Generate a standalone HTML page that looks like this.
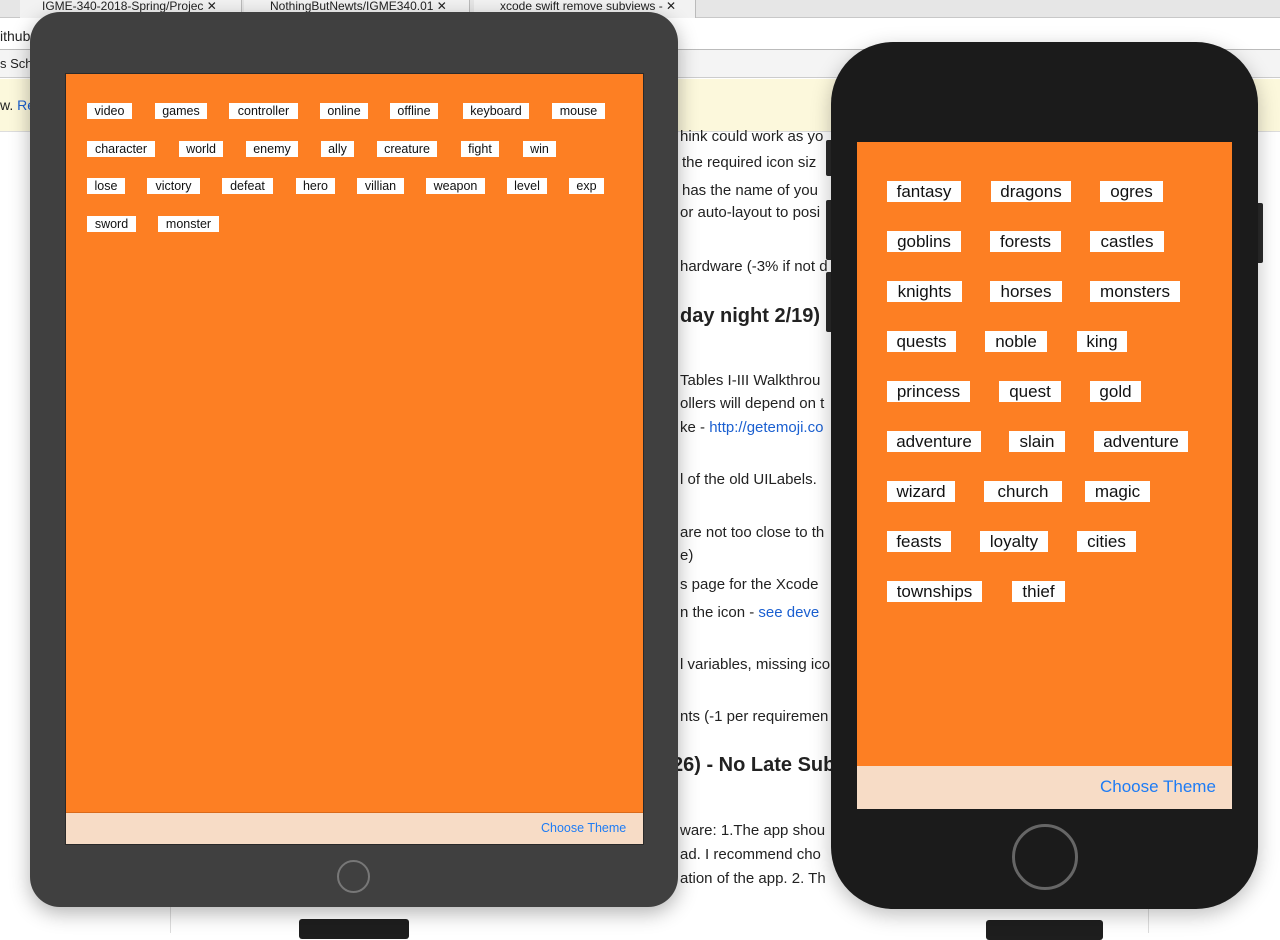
<!DOCTYPE html>
<html><head><meta charset="utf-8"><style>
*{margin:0;padding:0;box-sizing:border-box}
body{width:1280px;height:933px;overflow:hidden;position:relative;background:#fff;font-family:"Liberation Sans",sans-serif}
.a{position:absolute}
.t{position:absolute;font-size:15px;color:#222;white-space:nowrap}
.l{position:absolute;background:#fff;color:#111;white-space:nowrap;text-align:center}
.pl{font-size:12.5px;height:16px;line-height:16px}
.ph{font-size:17px;height:21px;line-height:21px}
</style></head><body>
<div class="a" style="left:0;top:0;width:1280px;height:18px;background:#e6e6e6;border-bottom:1px solid #c8c8c8"></div>
<div class="a" style="left:20px;top:0;width:222px;height:18px;background:#f2f2f2;border-right:1px solid #bbb;font-size:12px;line-height:12px;padding-left:22px;color:#222">IGME-340-2018-Spring/Projec ✕</div>
<div class="a" style="left:244px;top:0;width:226px;height:18px;background:#f2f2f2;border-right:1px solid #bbb;font-size:12px;line-height:12px;padding-left:26px;color:#222">NothingButNewts/IGME340.01 ✕</div>
<div class="a" style="left:474px;top:0;width:222px;height:18px;background:#f2f2f2;border-right:1px solid #bbb;font-size:12px;line-height:12px;padding-left:26px;color:#222">xcode swift remove subviews - ✕</div>
<div class="a" style="left:0;top:18px;width:1280px;height:32px;background:#fff;border-bottom:1px solid #bbb"></div>
<div class="t" style="left:0;top:28px;font-size:14px">ithub</div>
<div class="a" style="left:0;top:50px;width:1280px;height:28px;background:#f4f4f4;border-bottom:1px solid #ccc"></div>
<div class="t" style="left:0;top:56px;font-size:13px">s Sch</div>
<div class="a" style="left:0;top:79px;width:1280px;height:53px;background:#fcf8dc;border-bottom:1px solid #ddd"></div>
<div class="t" style="left:0;top:97px;font-size:14px">w. <span style="color:#1a5fd0">Re</span></div>
<div class="a" style="left:170px;top:132px;width:1px;height:801px;background:#ddd"></div>
<div class="a" style="left:1148px;top:132px;width:1px;height:801px;background:#ddd"></div>
<div class="t" style="left:680px;top:128px">hink could work as yo</div>
<div class="t" style="left:682px;top:154px">the required icon siz</div>
<div class="t" style="left:682px;top:182px">has the name of you</div>
<div class="t" style="left:680px;top:204px">or auto-layout to posi</div>
<div class="t" style="left:680px;top:258px">hardware (-3% if not d</div>
<div class="t" style="left:680px;top:305px;font-size:20px;font-weight:bold">day night 2/19) -</div>
<div class="t" style="left:680px;top:372px">Tables I-III Walkthrou</div>
<div class="t" style="left:680px;top:395px">ollers will depend on t</div>
<div class="t" style="left:680px;top:419px">ke - <span style="color:#1a5fd0">http://getemoji.co</span></div>
<div class="t" style="left:680px;top:471px">l of the old UILabels.</div>
<div class="t" style="left:680px;top:524px">are not too close to th</div>
<div class="t" style="left:680px;top:547px">e)</div>
<div class="t" style="left:680px;top:576px">s page for the Xcode</div>
<div class="t" style="left:680px;top:604px">n the icon - <span style="color:#1a5fd0">see deve</span></div>
<div class="t" style="left:680px;top:656px">l variables, missing ico</div>
<div class="t" style="left:680px;top:708px">nts (-1 per requiremen</div>
<div class="t" style="left:672px;top:754px;font-size:20px;font-weight:bold">26) - No Late Subr</div>
<div class="t" style="left:680px;top:822px">ware: 1.The app shou</div>
<div class="t" style="left:680px;top:846px">ad. I recommend cho</div>
<div class="t" style="left:680px;top:870px">ation of the app. 2. Th</div>
<div class="t" style="left:250px;top:895px;font-size:13px">issues.</div>
<div class="a" style="left:299px;top:919px;width:110px;height:20px;background:#1e1e1e;border-radius:3px"></div>
<div class="a" style="left:986px;top:920px;width:117px;height:20px;background:#1e1e1e;border-radius:3px"></div>

<div class="a" style="left:30px;top:12px;width:648px;height:895px;background:#404040;border-radius:30px;box-shadow:0 6px 20px rgba(0,0,0,.3)"></div>
<div class="a" style="left:65px;top:73px;width:579px;height:772px;background:#fd7f23;border:1px solid #2a2a2a"></div>
<div class="a" style="left:66px;top:812px;width:577px;height:32px;background:#f7dcc6;border-top:1px solid #d96a1a"></div>
<div class="a" style="left:541px;top:821px;font-size:12.5px;color:#1e7cf5">Choose Theme</div>
<div class="a" style="left:337px;top:860px;width:33px;height:33px;border:2px solid #777;border-radius:50%"></div>

<div class="l pl" style="left:87px;top:103px;width:45px">video</div>
<div class="l pl" style="left:155px;top:103px;width:52px">games</div>
<div class="l pl" style="left:229px;top:103px;width:69px">controller</div>
<div class="l pl" style="left:320px;top:103px;width:48px">online</div>
<div class="l pl" style="left:390px;top:103px;width:48px">offline</div>
<div class="l pl" style="left:463px;top:103px;width:66px">keyboard</div>
<div class="l pl" style="left:552px;top:103px;width:53px">mouse</div>
<div class="l pl" style="left:87px;top:141px;width:68px">character</div>
<div class="l pl" style="left:179px;top:141px;width:44px">world</div>
<div class="l pl" style="left:246px;top:141px;width:52px">enemy</div>
<div class="l pl" style="left:321px;top:141px;width:33px">ally</div>
<div class="l pl" style="left:377px;top:141px;width:60px">creature</div>
<div class="l pl" style="left:461px;top:141px;width:38px">fight</div>
<div class="l pl" style="left:523px;top:141px;width:33px">win</div>
<div class="l pl" style="left:87px;top:178px;width:38px">lose</div>
<div class="l pl" style="left:147px;top:178px;width:53px">victory</div>
<div class="l pl" style="left:222px;top:178px;width:51px">defeat</div>
<div class="l pl" style="left:296px;top:178px;width:39px">hero</div>
<div class="l pl" style="left:357px;top:178px;width:47px">villian</div>
<div class="l pl" style="left:426px;top:178px;width:59px">weapon</div>
<div class="l pl" style="left:507px;top:178px;width:40px">level</div>
<div class="l pl" style="left:569px;top:178px;width:35px">exp</div>
<div class="l pl" style="left:87px;top:216px;width:49px">sword</div>
<div class="l pl" style="left:158px;top:216px;width:61px">monster</div>

<div class="a" style="left:826px;top:140px;width:8px;height:36px;background:#2a2a2a;border-radius:2px"></div>
<div class="a" style="left:826px;top:200px;width:8px;height:60px;background:#2a2a2a;border-radius:2px"></div>
<div class="a" style="left:826px;top:272px;width:8px;height:60px;background:#2a2a2a;border-radius:2px"></div>
<div class="a" style="left:1256px;top:203px;width:7px;height:60px;background:#2a2a2a;border-radius:2px"></div>
<div class="a" style="left:831px;top:42px;width:427px;height:867px;background:#1b1b1b;border-radius:62px;box-shadow:0 6px 20px rgba(0,0,0,.25)"></div>
<div class="a" style="left:857px;top:142px;width:375px;height:667px;background:#fd7f23"></div>
<div class="a" style="left:857px;top:766px;width:375px;height:43px;background:#f7dcc6"></div>
<div class="a" style="left:1100px;top:777px;font-size:17px;color:#1e7cf5">Choose Theme</div>
<div class="a" style="left:1012px;top:824px;width:66px;height:66px;border:3px solid #666;border-radius:50%"></div>

<div class="l ph" style="left:887px;top:181px;width:74px">fantasy</div>
<div class="l ph" style="left:991px;top:181px;width:80px">dragons</div>
<div class="l ph" style="left:1100px;top:181px;width:63px">ogres</div>
<div class="l ph" style="left:887px;top:231px;width:74px">goblins</div>
<div class="l ph" style="left:990px;top:231px;width:71px">forests</div>
<div class="l ph" style="left:1090px;top:231px;width:74px">castles</div>
<div class="l ph" style="left:887px;top:281px;width:75px">knights</div>
<div class="l ph" style="left:990px;top:281px;width:72px">horses</div>
<div class="l ph" style="left:1090px;top:281px;width:90px">monsters</div>
<div class="l ph" style="left:887px;top:331px;width:69px">quests</div>
<div class="l ph" style="left:985px;top:331px;width:62px">noble</div>
<div class="l ph" style="left:1077px;top:331px;width:50px">king</div>
<div class="l ph" style="left:887px;top:381px;width:83px">princess</div>
<div class="l ph" style="left:999px;top:381px;width:62px">quest</div>
<div class="l ph" style="left:1090px;top:381px;width:51px">gold</div>
<div class="l ph" style="left:887px;top:431px;width:94px">adventure</div>
<div class="l ph" style="left:1009px;top:431px;width:56px">slain</div>
<div class="l ph" style="left:1094px;top:431px;width:94px">adventure</div>
<div class="l ph" style="left:887px;top:481px;width:68px">wizard</div>
<div class="l ph" style="left:984px;top:481px;width:78px">church</div>
<div class="l ph" style="left:1085px;top:481px;width:65px">magic</div>
<div class="l ph" style="left:887px;top:531px;width:64px">feasts</div>
<div class="l ph" style="left:980px;top:531px;width:68px">loyalty</div>
<div class="l ph" style="left:1077px;top:531px;width:59px">cities</div>
<div class="l ph" style="left:887px;top:581px;width:95px">townships</div>
<div class="l ph" style="left:1012px;top:581px;width:53px">thief</div>
</body></html>
